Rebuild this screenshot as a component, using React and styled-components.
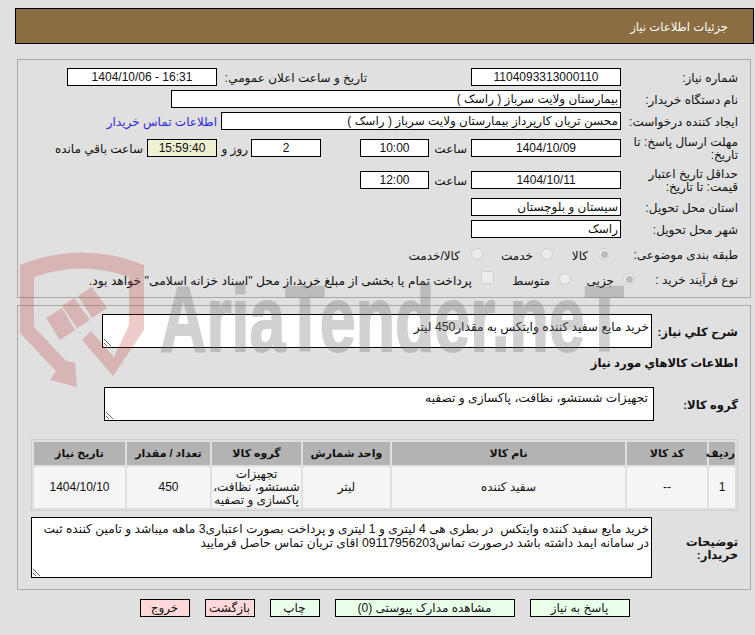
import React from "react";
import styled, { createGlobalStyle } from "styled-components";

const Global = createGlobalStyle`
  html, body { margin: 0; padding: 0; background: #e0e0e0; }
  body { font-family: "Liberation Sans", "DejaVu Sans", sans-serif; font-size: 12px; color: #111; }
`;

const Page = styled.div`
  position: relative;
  width: 755px;
  height: 635px;
  overflow: hidden;
  box-sizing: border-box;
  padding: 8px 1px 0 15px;
  direction: rtl;
`;

const Header = styled.div`
  height: 36px;
  box-sizing: border-box;
  border: 1px solid #000;
  background: #8c6c41;
  color: #fff;
  font-size: 11.6px;
  padding: 1px 25px 0 0;
  display: flex;
  align-items: center;
`;

const Panel = styled.div`
  margin: ${(p) => p.$top}px 3px 0 2px;
  border: 1px solid #a8a8a8;
  box-sizing: border-box;
  height: ${(p) => p.$height}px;
  padding: 8px 12px 0 0;
`;

const Rows = styled.div`
  display: flex;
  flex-direction: column;
  gap: 4px;
`;

const Row = styled.div`
  display: flex;
  align-items: center;
  height: ${(p) => p.$h || 18}px;
`;

const Label = styled.div`
  width: ${(p) => p.$w || 117}px;
  flex: none;
  box-sizing: border-box;
  padding-top: ${(p) => (p.$bold ? 0 : 2)}px;
  line-height: 13px;
  font-weight: ${(p) => (p.$bold ? 700 : 400)};
  font-size: ${(p) => (p.$bold ? 11.6 : 12)}px;
`;

const Field = styled.div`
  width: ${(p) => p.$w}px;
  flex: none;
  height: 18px;
  box-sizing: border-box;
  border: 1px solid #000;
  background: ${(p) => (p.$timer ? "#f0f0d2" : "#fff")};
  display: flex;
  align-items: center;
  justify-content: ${(p) => (p.$start ? "flex-start" : "center")};
  padding: 0 2px;
  margin-right: ${(p) => p.$mr || 0}px;
  white-space: nowrap;
  overflow: hidden;
  font-size: 12px;
`;

const Inline = styled.span`
  flex: none;
  box-sizing: border-box;
  white-space: nowrap;
  padding-top: 2px;
  width: ${(p) => (p.$w ? `${p.$w}px` : "auto")};
  margin-right: ${(p) => p.$mr || 0}px;
`;

const BuyerLink = styled(Inline)`
  color: #2a2ae0;
`;

const Options = styled.div`
  display: flex;
  align-items: center;
  padding-top: 4px;
`;

const OptionText = styled.span`
  flex: none;
  white-space: nowrap;
  width: ${(p) => (p.$w ? `${p.$w}px` : "auto")};
  font-size: ${(p) => p.$size || 12}px;
`;

const Radio = styled.span`
  flex: none;
  box-sizing: border-box;
  width: 12px;
  height: 12px;
  border-radius: 50%;
  border: 1px solid #cfcfcf;
  background: #ececec;
  display: flex;
  align-items: center;
  justify-content: center;
  margin-right: ${(p) => p.$mr || 0}px;
  margin-left: ${(p) => p.$ml}px;
  transform: translateY(-2px);
  &::after {
    content: "";
    display: ${(p) => (p.$on ? "block" : "none")};
    width: 7px;
    height: 7px;
    border-radius: 50%;
    background: #bdbdbd;
  }
`;

const Check = styled.span`
  flex: none;
  box-sizing: border-box;
  width: 13px;
  height: 13px;
  border: 1px solid #cfcfcf;
  border-radius: 2px;
  background: #ececec;
  margin-right: ${(p) => p.$mr || 0}px;
  margin-left: ${(p) => p.$ml}px;
  transform: translateY(-4px);
`;

const NoteRow = styled.div`
  display: flex;
  align-items: center;
  margin-top: ${(p) => p.$mt || 0}px;
`;

const Note = styled.textarea`
  display: block;
  flex: none;
  width: ${(p) => p.$w}px;
  height: ${(p) => p.$h}px;
  box-sizing: border-box;
  margin: 0;
  border: 1px solid #000;
  border-radius: 0;
  outline: none;
  background: #fff;
  color: #111;
  font: 12.2px/14px "Liberation Sans", "DejaVu Sans", sans-serif;
  padding: ${(p) => p.$pad};
  overflow: hidden;
  direction: rtl;
`;

const SectionTitle = styled.div`
  font-weight: 700;
  font-size: 11.6px;
  margin-top: 8px;
  height: 14px;
  line-height: 14px;
`;

const Items = styled.table`
  width: 707px;
  margin: ${(p) => p.$mt}px 0 0 0;
  table-layout: fixed;
  border-collapse: separate;
  border-spacing: 2px;
  border: 1px solid #cdcdcd;
  font-size: 12px;
  box-sizing: border-box;
`;

const Th = styled.th`
  width: ${(p) => p.$w}px;
  height: 23px;
  padding: 0;
  background: #b3b3b3;
  font-size: 11px;
  font-weight: 700;
  white-space: nowrap;
`;

const Td = styled.td`
  height: 41px;
  padding: 0;
  background: #f5f5f5;
  text-align: center;
  line-height: 13px;
  white-space: nowrap;
`;

const Actions = styled.div`
  display: flex;
  justify-content: center;
  gap: 15px;
  margin-top: 9px;
`;

const Action = styled.button`
  width: ${(p) => p.$w}px;
  height: 18px;
  box-sizing: border-box;
  border: 1px solid #000;
  border-radius: 0;
  padding: 0;
  background: ${(p) => (p.$danger ? "#ffd9d9" : "#e9ffe9")};
  color: #111;
  font: 12px "Liberation Sans", "DejaVu Sans", sans-serif;
`;

const Mark = styled.svg`
  position: absolute;
  left: 0;
  top: 0;
  pointer-events: none;
`;

const MarkText = styled.div`
  position: absolute;
  left: 160px;
  top: 286px;
  direction: ltr;
  font: 700 92px/66px "Liberation Sans", sans-serif;
  color: #737373;
  -webkit-text-stroke: 2px #737373;
  opacity: 0.32;
  white-space: nowrap;
  transform-origin: 0 0;
  transform: scaleX(0.7);
  pointer-events: none;
`;

const Watermark = () => (
  <>
    <Mark width="200" height="400" viewBox="0 0 200 400">
      <g fill="rgba(190,50,50,0.25)">
        <path
          fillRule="evenodd"
          d="M20 265 Q82 240 144 265 L144 330 L113 376 L82 340 L91 331 L114 357 L129 325 L129 277 Q82 260 34 277 L34 327 L66 361 L75 363 L77 387 L50 380 L56 371 L20 333 Z"
        />
        <path d="M46 318 L62 308 L75 330 L60 340 Z" />
        <path d="M78 296 L92 287 L107 308 L92 318 Z" />
        <path d="M62 306 L74 298 L90 320 L77 328 Z" />
      </g>
    </Mark>
    <MarkText>AriaTender.neT</MarkText>
  </>
);

const App = () => (
  <Page>
    <Global />
    <Header>جزئیات اطلاعات نیاز</Header>

    <Panel $top={15} $height={239}>
      <Rows>
        <Row>
          <Label>شماره نیاز:</Label>
          <Field $w={150}>1104093313000110</Field>
          <Inline $mr={104} $w={150}>تاریخ و ساعت اعلان عمومي:</Inline>
          <Field $w={150} dir="ltr">1404/10/06 - 16:31</Field>
        </Row>
        <Row>
          <Label>نام دستگاه خریدار:</Label>
          <Field $w={450} $start>بیمارستان ولایت سرباز ( راسک )</Field>
        </Row>
        <Row>
          <Label>ایجاد کننده درخواست:</Label>
          <Field $w={400} $start>محسن تریان کارپرداز بیمارستان ولایت سرباز ( راسک )</Field>
          <BuyerLink $mr={4}>اطلاعات تماس خریدار</BuyerLink>
        </Row>
        <Row $h={28}>
          <Label>مهلت ارسال پاسخ: تا تاریخ:</Label>
          <Field $w={150}>1404/10/09</Field>
          <Inline $mr={4} $w={38}>ساعت</Inline>
          <Field $w={69}>10:00</Field>
          <Field $w={70} $mr={39}>2</Field>
          <Inline $mr={3} $w={31}>روز و</Inline>
          <Field $w={70} $timer>15:59:40</Field>
          <Inline $mr={4}>ساعت باقي مانده</Inline>
        </Row>
        <Row $h={28}>
          <Label>حداقل تاریخ اعتبار قیمت: تا تاریخ:</Label>
          <Field $w={150}>1404/10/11</Field>
          <Inline $mr={4} $w={38}>ساعت</Inline>
          <Field $w={69}>12:00</Field>
        </Row>
        <Row>
          <Label>استان محل تحویل:</Label>
          <Field $w={150} $start>سیستان و بلوچستان</Field>
        </Row>
        <Row>
          <Label>شهر محل تحویل:</Label>
          <Field $w={150} $start>راسک</Field>
        </Row>
        <Row $h={24}>
          <Label $w={128}>طبقه بندی موضوعی:</Label>
          <Options>
            <Radio $on $ml={10} />
            <OptionText $w={16}>کالا</OptionText>
            <Radio $mr={19} $ml={8} />
            <OptionText $w={32}>خدمت</OptionText>
            <Radio $mr={18} $ml={11} />
            <OptionText>کالا/خدمت</OptionText>
          </Options>
        </Row>
        <Row>
          <Label $w={103}>نوع فرآیند خرید :</Label>
          <Options>
            <Radio $on $ml={9} />
            <OptionText $w={28}>جزیی</OptionText>
            <Radio $mr={15} $ml={9} />
            <OptionText $w={36}>متوسط</OptionText>
            <Check $mr={20} $ml={9} />
            <OptionText $size={12.3}>پرداخت تمام یا بخشی از مبلغ خرید،از محل "اسناد خزانه اسلامی" خواهد بود.</OptionText>
          </Options>
        </Row>
      </Rows>
    </Panel>

    <Panel $top={7} $height={285}>
      <NoteRow>
        <Label $w={86} $bold>شرح كلي نياز:</Label>
        <Note $w={550} $h={34} $pad="5px 2px 0" readOnly value="خرید مایع سفید کننده وایتکس به مقدار450 لیتر" />
      </NoteRow>
      <SectionTitle>اطلاعات كالاهاي مورد نياز</SectionTitle>
      <NoteRow $mt={17}>
        <Label $w={84} $bold>گروه كالا:</Label>
        <Note $w={550} $h={34} $pad="3px 5px 0" readOnly value="تجهیزات شستشو، نظافت، پاکسازی و تصفیه" />
      </NoteRow>
      <Items $mt={18}>
        <thead>
          <tr>
            <Th $w={26}>ردیف</Th>
            <Th $w={80}>کد کالا</Th>
            <Th $w={233}>نام کالا</Th>
            <Th $w={87}>واحد شمارش</Th>
            <Th $w={89}>گروه کالا</Th>
            <Th $w={83}>تعداد / مقدار</Th>
            <Th $w={91}>تاریخ نیاز</Th>
          </tr>
        </thead>
        <tbody>
          <tr>
            <Td>1</Td>
            <Td>--</Td>
            <Td>سفید کننده</Td>
            <Td>لیتر</Td>
            <Td>تجهیزات<br />شستشو، نظافت،<br />پاکسازی و تصفیه</Td>
            <Td>450</Td>
            <Td>1404/10/10</Td>
          </tr>
        </tbody>
      </Items>
      <NoteRow $mt={6}>
        <Label $w={86} $bold>توضیحات خریدار:</Label>
        <Note
          $w={621}
          $h={61}
          $pad="4px 2px 0"
          readOnly
          value={"خرید مایع سفید کننده وایتکس  در بطری هی 4 لیتری و 1 لیتری و پرداخت بصورت اعتباری3 ماهه میباشد و تامین کننده ثبت\nدر سامانه ایمد داشته باشد درصورت تماس09117956203 اقای تریان تماس حاصل فرمایید"}
        />
      </NoteRow>
    </Panel>

    <Actions>
      <Action $w={100}>پاسخ به نیاز</Action>
      <Action $w={180}>مشاهده مدارک پیوستی (0)</Action>
      <Action $w={50}>چاپ</Action>
      <Action $w={50} $danger>بازگشت</Action>
      <Action $w={50} $danger>خروج</Action>
    </Actions>

    <Watermark />
  </Page>
);

export default App;
